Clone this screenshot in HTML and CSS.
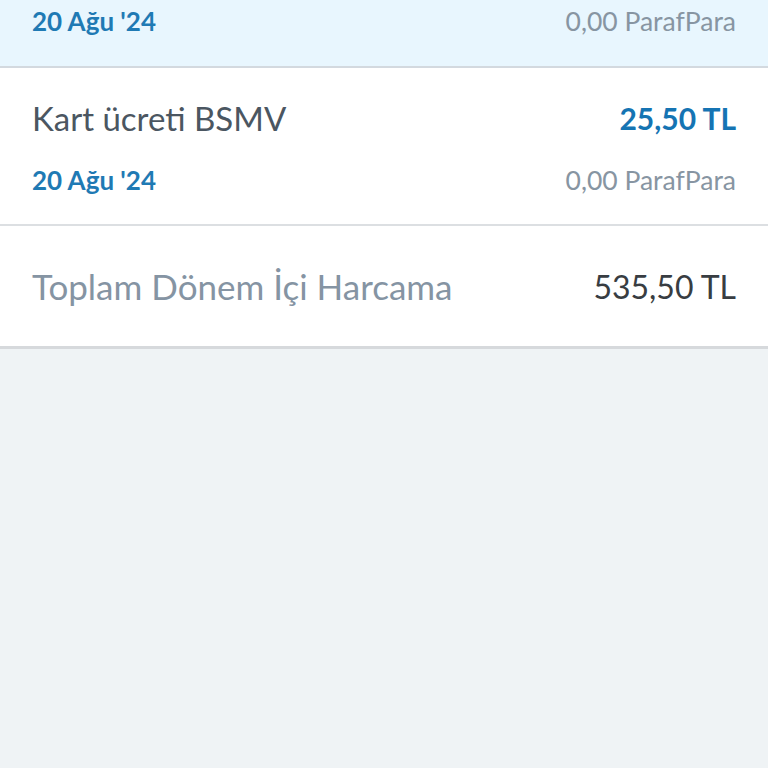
FILE: index.html
```html
<!DOCTYPE html>
<html lang="tr">
<head>
    <meta charset="UTF-8">
    <meta name="viewport" content="width=device-width, initial-scale=1.0">
    <title>Dönem İçi Harcamalar</title>
    <link rel="stylesheet" href="styles.css">
</head>
<body>
    <div class="list">
        <div class="item item-active">
            <div class="item-line">
                <span class="item-date">20 Ağu '24</span>
                <span class="item-points">0,00 ParafPara</span>
            </div>
        </div>

        <div class="item">
            <div class="item-line item-head">
                <span class="item-title">Kart ücreti BSMV</span>
                <span class="item-amount">25,50 TL</span>
            </div>
            <div class="item-line">
                <span class="item-date">20 Ağu '24</span>
                <span class="item-points">0,00 ParafPara</span>
            </div>
        </div>

        <div class="total">
            <span class="total-label">Toplam Dönem İçi Harcama</span>
            <span class="total-amount">535,50 TL</span>
        </div>
    </div>
</body>
</html>
```

FILE: styles.css
```css
body {
    margin: 0;
    background-color: #eff3f5;
    font-family: 'Lato', 'Noto Sans', sans-serif;
}

.list {
    background: white;
}

.item {
    padding: 26px 32px 28px;
    border-bottom: 2px solid #dcdfe2;
}

.item-active {
    background-color: #e8f6fe;
    padding-top: 5px;
    padding-bottom: 29px;
    border-bottom-color: #d3d9df;
}

.item-line {
    display: flex;
    justify-content: space-between;
    align-items: center;
    height: 32px;
}

.item-head {
    height: 48px;
    margin-bottom: 22px;
}

.item-title {
    font-size: 33px;
    color: #4b5661;
}

.item-amount {
    font-size: 30px;
    font-weight: bold;
    color: #1574b3;
}

.item-date {
    font-size: 26px;
    font-weight: bold;
    color: #1f7ab4;
}

.item-points {
    font-size: 26.5px;
    color: #8795a2;
}

.total {
    display: flex;
    justify-content: space-between;
    align-items: center;
    height: 120px;
    padding: 0 32px;
    border-bottom: 3px solid #d6d9dc;
}

.total-label {
    font-size: 35px;
    color: #8594a3;
}

.total-amount {
    font-size: 32px;
    color: #383d42;
}
```
